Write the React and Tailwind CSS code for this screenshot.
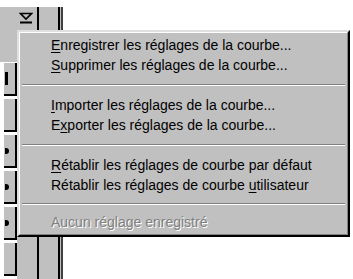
import React from 'react';

const items = [
  { pre: '', key: 'E', post: 'nregistrer les réglages de la courbe...' },
  { pre: '', key: 'S', post: 'upprimer les réglages de la courbe...' },
  'sep',
  { pre: '', key: 'I', post: 'mporter les réglages de la courbe...' },
  { pre: 'E', key: 'x', post: 'porter les réglages de la courbe...' },
  'sep',
  { pre: '', key: 'R', post: 'établir les réglages de courbe par défaut' },
  { pre: 'Rétablir les réglages de courbe ', key: 'u', post: 'tilisateur' },
  'sepShort',
  { disabled: true, text: 'Aucun réglage enregistré' },
];

const SideButton = ({ mark }) => (
  <div className="h-[33px] mb-[3px] ml-[4px] bg-[#c0c0c0] border-r-2 border-b-2 border-black flex items-center pl-[1px]">
    {mark === 'bar' && <div className="w-[3px] h-[13px] bg-black" />}
    {mark === 'dot' && <div className="w-[4px] h-[6px] bg-black rounded-r-full" />}
  </div>
);

const MenuRow = ({ item }) => {
  if (item === 'sep' || item === 'sepShort') {
    return (
      <div className={`${item === 'sep' ? 'h-[20px]' : 'h-[17px]'} flex flex-col justify-center px-[2px]`}>
        <div className="h-px bg-[#808080]" />
        <div className="h-px bg-white" />
      </div>
    );
  }
  if (item.disabled) {
    return (
      <div className="h-[20px] flex items-center pl-[31px] text-[#808080] [text-shadow:1px_1px_0_#ffffff]">
        {item.text}
      </div>
    );
  }
  return (
    <div className="h-[20px] flex items-center pl-[31px] text-black whitespace-pre">
      {item.pre}
      <span className="underline decoration-1 underline-offset-2">{item.key}</span>
      {item.post}
    </div>
  );
};

export default function App() {
  return (
    <div className="relative w-[353px] h-[279px] bg-white overflow-hidden font-['Liberation_Sans',Arial,sans-serif] text-[14px]">
      {/* background window parts */}
      <div className="flex h-full">
        <div className="w-[17px] pt-[7px] flex flex-col">
          <div className="h-[70px] bg-[#c0c0c0]" />
          <div className="flex-1 bg-white pt-[1px]">
            <SideButton mark="bar" />
            <SideButton />
            <SideButton mark="dot" />
            <SideButton mark="dot" />
            <SideButton mark="dot" />
            <SideButton />
          </div>
        </div>
        <div className="w-[22px] pt-[7px] flex flex-col">
          <div className="h-[21px] bg-[#c0c0c0] border-r-2 border-black flex items-center justify-center pr-[2px]">
            <svg width="14" height="12" viewBox="0 0 14 12">
              <path d="M1.5 1.5 H12.5 L7 7 Z" fill="none" stroke="#000" strokeWidth="1.6" />
              <rect x="1" y="9.5" width="12" height="2" fill="#000" />
            </svg>
          </div>
          <div className="flex-1 bg-[#c0c0c0] border-r-2 border-black" />
        </div>
        <div className="w-[19px] mt-[7px] bg-[#c0c0c0]" />
        <div className="w-[2px] mt-[7px] bg-black" />
        <div className="w-[1px] mt-[7px] bg-[#c0c0c0]" />
        <div className="w-[2px] mt-[7px] bg-[#404040]" />
        <div className="flex-1 bg-white" />
      </div>

      {/* dropdown menu */}
      <div className="absolute left-[17px] top-[30px] w-[333px] h-[207px] bg-[#c0c0c0] border-t-2 border-l-2 border-t-[#dfdfdf] border-l-[#dfdfdf] border-r-2 border-b-2 border-r-black border-b-black">
        <div className="h-full border border-t-white border-l-white border-r-[#808080] border-b-[#808080] pt-[2px]">
          {items.map((item, i) => (
            <MenuRow key={i} item={item} />
          ))}
        </div>
      </div>
    </div>
  );
}
